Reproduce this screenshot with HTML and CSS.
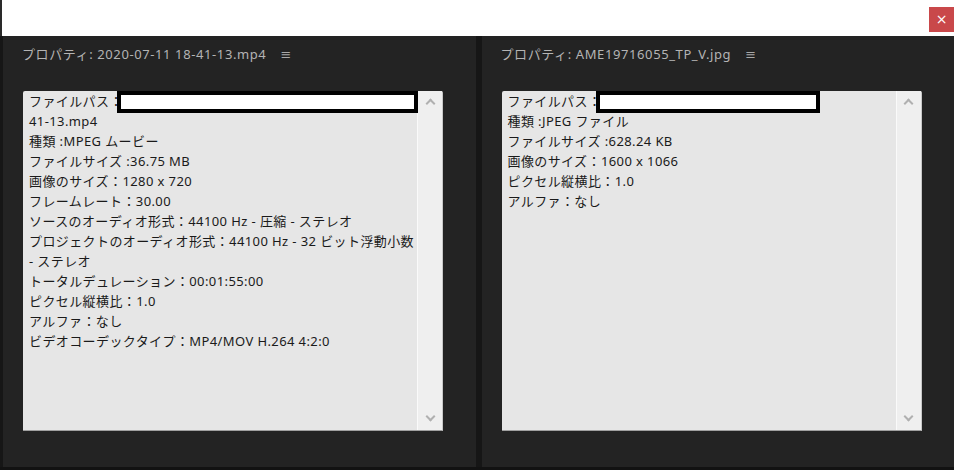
FILE: index.html
```html
<!DOCTYPE html>
<html lang="ja">
<head>
    <meta charset="UTF-8">
    <title>プロパティ</title>
    <link rel="stylesheet" href="styles.css">
</head>
<body>
    <div class="topbar">
        <button class="close">×</button>
    </div>
    <div class="panels">
        <div class="panel">
            <div class="title">プロパティ: 2020-07-11 18-41-13.mp4 <span class="menu">≡</span></div>
            <div class="infobox">
                <div class="lines">
                    <p>ファイルパス：</p>
                    <p>41-13.mp4</p>
                    <p>種類 :MPEG ムービー</p>
                    <p>ファイルサイズ :36.75 MB</p>
                    <p>画像のサイズ：1280 x 720</p>
                    <p>フレームレート：30.00</p>
                    <p>ソースのオーディオ形式：44100 Hz - 圧縮 - ステレオ</p>
                    <p>プロジェクトのオーディオ形式：44100 Hz - 32 ビット浮動小数</p>
                    <p>- ステレオ</p>
                    <p>トータルデュレーション：00:01:55:00</p>
                    <p>ピクセル縦横比：1.0</p>
                    <p>アルファ：なし</p>
                    <p>ビデオコーデックタイプ：MP4/MOV H.264 4:2:0</p>
                    <span class="redact redact-1"></span>
                </div>
                <div class="scrollbar">
                    <span class="arrow up"></span>
                    <span class="arrow down"></span>
                </div>
            </div>
        </div>
        <div class="panel">
            <div class="title">プロパティ: AME19716055_TP_V.jpg <span class="menu">≡</span></div>
            <div class="infobox">
                <div class="lines">
                    <p>ファイルパス：</p>
                    <p>種類 :JPEG ファイル</p>
                    <p>ファイルサイズ :628.24 KB</p>
                    <p>画像のサイズ：1600 x 1066</p>
                    <p>ピクセル縦横比：1.0</p>
                    <p>アルファ：なし</p>
                    <span class="redact redact-2"></span>
                </div>
                <div class="scrollbar">
                    <span class="arrow up"></span>
                    <span class="arrow down"></span>
                </div>
            </div>
        </div>
    </div>
    <div class="bottom"></div>
</body>
</html>
```

FILE: styles.css
```css
body {
    margin: 0;
    width: 954px;
    height: 470px;
    overflow: hidden;
    background: #1a1a1a;
    font-family: "Noto Sans", "Noto Sans CJK JP", sans-serif;
}

.topbar {
    height: 36px;
    background: #ffffff;
    border-left: 2px solid #2a2a2a;
    display: flex;
    justify-content: flex-end;
    align-items: flex-start;
    box-sizing: border-box;
}

.close {
    margin-top: 7px;
    width: 25px;
    height: 25px;
    border: none;
    padding: 0;
    background: #c9484a;
    color: #ffffff;
    font-size: 14px;
    line-height: 25px;
    font-family: "DejaVu Sans", sans-serif;
}

.panels {
    display: flex;
    gap: 6px;
    padding-left: 3px;
    height: 431px;
    background: #161616;
}

.panel {
    flex: 1;
    background: #232323;
    padding-left: 20px;
}

.title {
    height: 55px;
    line-height: 36px;
    font-size: 13px;
    letter-spacing: 0.6px;
    color: #b4b4b4;
    margin-left: -1px;
}

.menu {
    margin-left: 10px;
    font-family: "DejaVu Sans", sans-serif;
    color: #a8a8a8;
}

.infobox {
    width: 420px;
    height: 340px;
    display: flex;
    background: #e6e6e6;
    border-right: 1px solid #c8c8c8;
    border-bottom: 1px solid #a0a0a0;
    box-sizing: border-box;
    border-radius: 2px 2px 0 0;
}

.lines {
    flex: 1;
    position: relative;
    padding-left: 6px;
}

.lines p {
    margin: 0;
    font-size: 13px;
    line-height: 20px;
    letter-spacing: 0.4px;
    color: #1a1a1a;
    white-space: nowrap;
}

.redact {
    position: absolute;
    top: 0;
    height: 22px;
    background: #ffffff;
    border: 4px solid #000000;
    box-sizing: border-box;
}

.redact-1 {
    left: 94px;
    width: 301px;
}

.redact-2 {
    left: 94px;
    width: 224px;
}

.scrollbar {
    width: 24px;
    background: #efefef;
    border-left: 1px solid #fafafa;
    display: flex;
    flex-direction: column;
    justify-content: space-between;
    align-items: center;
    padding: 6px 0;
}

.arrow {
    width: 5px;
    height: 5px;
    border-left: 2px solid #b0b0b0;
    border-top: 2px solid #b0b0b0;
}

.arrow.up {
    transform: rotate(45deg);
    margin-top: 3px;
}

.arrow.down {
    transform: rotate(225deg);
    margin-bottom: 4px;
}

.bottom {
    height: 3px;
    background: #121212;
}
```
